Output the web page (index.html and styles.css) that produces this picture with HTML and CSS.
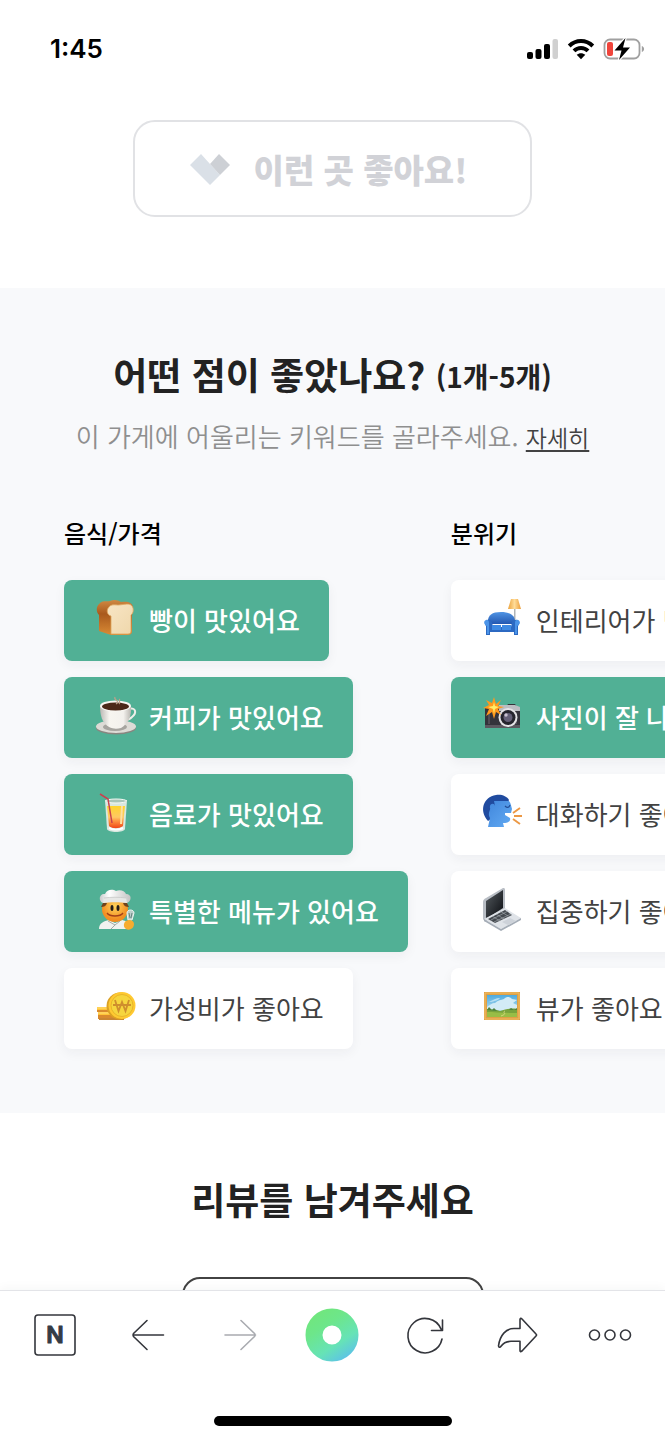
FILE: index.html
```html
<!DOCTYPE html>
<html lang="ko">
<head>
<meta charset="utf-8">
<meta name="viewport" content="width=device-width, initial-scale=1">
<title>리뷰 작성</title>
<link rel="stylesheet" href="styles.css">
</head>
<body>
<header class="status">
  <time class="status-time">1:45</time>
  <div class="status-icons">
    <svg width="32" height="22" viewBox="0 0 32 22" role="img" aria-label="신호">
      <rect x="0" y="14" width="6" height="7" rx="2"/><rect x="8.500" y="11" width="6" height="10" rx="2"/><rect x="17" y="6" width="6" height="15" rx="2"/><rect x="25.500" y="1" width="5.500" height="20" rx="2" fill="#d0d0d0"/>
    </svg>
    <svg width="28" height="22" viewBox="0 0 28 22" role="img" aria-label="와이파이">
      <path d="M2.200 8C9 1.400 19 1.400 25.800 8M7 12.900c4-4 10-4 14 0" fill="none" stroke="#000" stroke-width="4"/>
      <path d="M9.700 16.800c2.400-2.200 6.200-2.200 8.600 0L14 21.200z"/>
    </svg>
    <svg width="42" height="24" viewBox="0 0 42 24" role="img" aria-label="배터리 충전 중">
      <rect x="1.500" y="2.500" width="35" height="19" rx="5.500" fill="none" stroke="#a0a0a0" stroke-width="1.800"/>
      <path d="M38.800 9v6c3-1 3-5 0-6z" fill="#a0a0a0"/>
      <rect x="4" y="5" width="6" height="14" rx="2" fill="#f0453c"/>
      <path d="M22.500 1 11.500 13.500h7L16 23 27 10.500h-7z" stroke="#fff" stroke-width="2.500" paint-order="stroke" stroke-linejoin="round"/>
    </svg>
  </div>
</header>

<main class="page">
  <div class="like-area">
    <button class="like" type="button">
      <svg width="40" height="32" viewBox="0 0 40 32" aria-hidden="true">
        <path d="M0 12 11 1l9 10 10 11-10 10z" fill="#dae0e7"/>
        <path d="m20 11 9-10 11 11-10 10z" fill="#cdd0d5"/>
      </svg>
      이런 곳 좋아요!
    </button>
  </div>

  <section class="keywords">
    <h2 class="title">어떤 점이 좋았나요? <span class="title-note">(1개-5개)</span></h2>
    <p class="lead">이 가게에 어울리는 키워드를 골라주세요. <a class="more" href="#">자세히</a></p>
    <div class="columns">
      <div class="column">
        <h3 class="category">음식/가격</h3>
        <button class="chip chip-on" type="button" aria-pressed="true">
          <svg class="emoji" viewBox="0 0 40 40" aria-hidden="true">
            <defs>
              <linearGradient id="crust" x2="0" y2="1"><stop stop-color="#d08a43"/><stop offset=".4" stop-color="#a9591d"/><stop offset="1" stop-color="#d98b35"/></linearGradient>
              <linearGradient id="crumb" x2="1" y2="1"><stop stop-color="#f8e5c4"/><stop offset="1" stop-color="#efd7ab"/></linearGradient>
            </defs>
            <path d="M3 5C6 1 11 3 14 2c4-2 8-1 11 1 6-1 12 0 12 6 0 3-1 5-1 8v16c0 2-2 3-5 3H15L3 32V16C0 13 0 8 3 5z" fill="url(#crust)"/>
            <path d="M13 8c2-3 6-2 9-2 4 0 10-2 13 0 3 2 3 8 0 10v16c0 2-1 3-3 3H15V17c-4-1-5-6-2-9z" fill="url(#crumb)" stroke="#dda45c" stroke-width=".8"/>
          </svg>
          빵이 맛있어요
        </button>
        <button class="chip chip-on" type="button" aria-pressed="true">
          <svg class="emoji" viewBox="0 0 40 40" aria-hidden="true">
            <defs><linearGradient id="cup"><stop stop-color="#bab8b4"/><stop offset=".3" stop-color="#f7f5f0"/><stop offset=".75" stop-color="#f3f1ed"/><stop offset="1" stop-color="#b8b5b0"/></linearGradient></defs>
            <ellipse cx="20" cy="32" rx="20" ry="6.500" fill="#888680"/><ellipse cx="20" cy="30.500" rx="20" ry="6.500" fill="#dddbd6"/><ellipse cx="19" cy="31" rx="12" ry="4" fill="#a6a49f"/>
            <path d="M33 13c7-2 8 4 3 8-2 2-4 3-7 3" fill="none" stroke="#efeee9" stroke-width="2"/>
            <path d="M4 10h31c1 10-3 18-10 22-4 1-8 1-12-1C6 27 4 19 4 10z" fill="url(#cup)"/>
            <ellipse cx="19.500" cy="10" rx="15.500" ry="5.500" fill="#f8f6f2"/><ellipse cx="19.500" cy="10.500" rx="13.500" ry="4" fill="#4b2819"/>
            <path d="M20 8c5-3-3-4-1-7M23 8c2-2-1-4 1-5" fill="none" stroke="#baa18b" stroke-width="1.200"/>
          </svg>
          커피가 맛있어요
        </button>
        <button class="chip chip-on" type="button" aria-pressed="true">
          <svg class="emoji" viewBox="0 0 40 40" aria-hidden="true">
            <defs><linearGradient id="juice" x2="0" y2="1"><stop stop-color="#ffd52d"/><stop offset=".5" stop-color="#ffc863"/><stop offset=".65" stop-color="#ff9a45"/><stop offset="1" stop-color="#f04416"/></linearGradient></defs>
            <path d="M9 7h22l-2 29c-1 4-17 4-18 0z" fill="#d9e7df"/><path d="M11 13h18l-2 20c-4 3-11 3-14 0z" fill="url(#juice)"/>
            <ellipse cx="20" cy="8" rx="10.500" ry="2" fill="#a8c5b8" stroke="#f5faf5"/><path d="M13 35c4 2 10 2 14 0" fill="none" stroke="#fff" stroke-width="2"/><path d="m26 13-1 18" stroke="#ffe0a2" stroke-width="2"/>
            <path d="m4 1 8 5 4 24" fill="none" stroke="#ca414e" stroke-width="1.500"/>
          </svg>
          음료가 맛있어요
        </button>
        <button class="chip chip-on" type="button" aria-pressed="true">
          <svg class="emoji" viewBox="0 0 40 40" aria-hidden="true">
            <defs><radialGradient id="face" cy=".4"><stop stop-color="#ffd45b"/><stop offset="1" stop-color="#f28e22"/></radialGradient><linearGradient id="hat"><stop stop-color="#c9cbcc"/><stop offset=".3" stop-color="#fff"/><stop offset="1" stop-color="#c4c4c3"/></linearGradient></defs>
            <path d="M3 39c0-6 5-8 10-9l6 3 7-3c5 1 9 3 9 9z" fill="#f1f2ef"/><path d="m12 31 7 4-4 4M19 35l5-4" fill="none" stroke="#a4aaa5"/>
            <circle cx="19" cy="19" r="13" fill="url(#face)"/>
            <path d="M7 13 5 17c3 0 5-1 6-4zm24 0 2 4c-3 0-5-1-6-4z" fill="#70431e"/>
            <path d="M7 13C2 11 3 3 9 4c2-5 8-5 11-3 4-2 9 0 10 3 6 0 6 7 1 9-7-2-17-2-24 0z" fill="url(#hat)"/><path d="M8 8c7-1 15-1 22 0l1 5c-7-1-17-1-24 0z" fill="#e7e8e6"/><path d="M8 8c7-1 15-1 22 0" fill="none" stroke="#c6c8c7" stroke-width=".8"/>
            <ellipse cx="16" cy="18" rx="1.500" ry="3" fill="#241c18"/><ellipse cx="22" cy="18" rx="1.500" ry="3" fill="#241c18"/><path d="M11 23c3 4 13 4 16 0" fill="none" stroke="#a33f18" stroke-width="1.300"/>
            <path d="M31 23c0-4 7-4 7 0l-2 7h-4z" fill="#bbceca" stroke="#f1f7f3"/><path d="m33 23 1 5m2-5-1 5" stroke="#66847e"/><path d="M30 31c3-2 8-1 8 3 0 6-7 7-9 4-2-2-1-6 1-7z" fill="#f7ac2f"/>
          </svg>
          특별한 메뉴가 있어요
        </button>
        <button class="chip" type="button" aria-pressed="false">
          <svg class="emoji" viewBox="0 0 40 40" aria-hidden="true">
            <path d="M1 20h16v5H1zm1 5h16v6H2z" fill="#ffc338"/><path d="M1 23h16v2H1zm1 5h16v4H2z" fill="#d9892e"/><path d="M1 21h14M2 26h14" stroke="#ffe17a"/><path d="M14 31h14v2H3v-2z" fill="#c98532"/>
            <circle cx="24" cy="19" r="13.500" fill="#dba123"/><circle cx="26" cy="18.500" r="13.500" fill="#ffc931"/><circle cx="26" cy="18.500" r="11" fill="#f6d53e" stroke="#e8b52a"/>
            <path d="m19 13 3.500 11L26 15l3.500 9L33 13M17 18h18" fill="none" stroke="#cf8e2d" stroke-width="1.800"/>
          </svg>
          가성비가 좋아요
        </button>
      </div>
      <div class="column">
        <h3 class="category">분위기</h3>
        <button class="chip" type="button" aria-pressed="false">
          <svg class="emoji" viewBox="0 0 40 40" aria-hidden="true">
            <defs><linearGradient id="sofa" x2="0" y2="1"><stop stop-color="#5094e4"/><stop offset="1" stop-color="#2358b1"/></linearGradient><linearGradient id="lamp"><stop stop-color="#eba23c"/><stop offset=".5" stop-color="#ffdc98"/><stop offset="1" stop-color="#eb9e3b"/></linearGradient></defs>
            <path d="M31 9h1.500v15H31z" fill="#afb4b7"/><path d="M28 0h7l3 10H25z" fill="url(#lamp)"/>
            <path d="M5 25c-1-8 3-12 13-12s15 4 14 12z" fill="url(#sofa)"/><path d="M3 27c-4-5 3-9 6-4l1 5h18l1-5c4-5 10-1 6 4v9h-4v-3H7v3H3z" fill="#2c69c2"/>
            <path d="M9 26h9v5H9zm10 0h9v5h-9z" fill="#3e8ae3"/><path d="M3 21c-3 1-2 5 1 6v8h2V24c0-2-1-4-3-3m32 0c3 1 2 5-1 6v8h-2V24c0-2 1-4 3-3" fill="#4b94e8"/>
          </svg>
          인테리어가 멋져요
        </button>
        <button class="chip chip-on" type="button" aria-pressed="true">
          <svg class="emoji" viewBox="0 0 40 40" aria-hidden="true">
            <path d="M2 11h21l2-3h7l2 3h3v21H2z" fill="#34333b"/><path d="M16 9h16l5 2v4H16z" fill="#bbbdc2"/><path d="M2 29h35v3H2z" fill="#5b575f"/><path d="M6 16v12M33 16v12" stroke="#6c6770"/>
            <circle cx="25" cy="21.500" r="9.500" fill="#e4e3e6"/><circle cx="25" cy="21.500" r="7.500" fill="#25242d"/><circle cx="25" cy="21.500" r="4.500" fill="#656078"/><circle cx="23" cy="19" r="1.700" fill="#c9c2d2"/>
            <path d="m11 1 2 7 5-4-3 6 6 1-6 2 3 6-5-3-2 7-2-7-6 4 3-7-6-1 6-3-3-5 6 3z" fill="#ff981c"/><path d="m11 6 1 4 4 1-4 2-1 5-1-5-5-2 5-1z" fill="#ffed69"/>
          </svg>
          사진이 잘 나와요
        </button>
        <button class="chip" type="button" aria-pressed="false">
          <svg class="emoji" viewBox="0 0 40 40" aria-hidden="true">
            <defs><linearGradient id="head" x2="1" y2="1"><stop stop-color="#4187dc"/><stop offset="1" stop-color="#62aaf3"/></linearGradient></defs>
            <path d="M5 28C-4 18 0 4 13 2c5-1 11 1 13 5l-4 9z" fill="#204b9f"/>
            <path d="M11 8h15c2 2 2 5 3 8l-1 4h-6v2l5 3c1 4-3 5-7 5l1 4H5l2-9c-3-5 1-8 0-10-1-4 4-6 5-2z" fill="url(#head)"/><path d="M22 13c2 2 4 2 5-1" fill="none" stroke="#234f98" stroke-width="1.200"/>
            <path d="m30 20 7-5M31 23h8m-9 3 7 5" stroke="#ec9845" stroke-width="1.900"/>
          </svg>
          대화하기 좋아요
        </button>
        <button class="chip" type="button" aria-pressed="false">
          <svg class="emoji" viewBox="0 0 40 40" aria-hidden="true">
            <defs><linearGradient id="screen" x2="1" y2="1"><stop stop-color="#555b60"/><stop offset="1" stop-color="#090b0f"/></linearGradient></defs>
            <path d="M0 12c0-2 1-3 3-4L20-2c1 0 2 0 2 2v19L2 32 0 29z" fill="#b8bdc4"/><path d="M3 11 20 0v18L3 29z" fill="url(#screen)"/>
            <path d="m1 29 21-11 16 10-20 11z" fill="#dfe3e8"/><path d="m1 29 17 10 20-11v2L18 41 1 31z" fill="#a5adb7"/><path d="m5 29 17-9 7 5-17 8z" fill="#454a50"/><path d="m8 30 17-9m-14 11 17-8M9 26l8 5m-4-7 8 5m-4-8 8 5" stroke="#abb1b7" stroke-width=".6"/><path d="m19 32 8-4 6 3-8 4z" fill="#cdd2d9"/>
          </svg>
          집중하기 좋아요
        </button>
        <button class="chip" type="button" aria-pressed="false">
          <svg class="emoji" viewBox="0 0 40 40" aria-hidden="true">
            <defs><linearGradient id="sky" x2="0" y2="1"><stop stop-color="#4eaade"/><stop offset="1" stop-color="#d9f0f5"/></linearGradient></defs>
            <path d="M1 5h36v28H1z" fill="#e0a044"/><path d="M2 6h34v26H2z" fill="none" stroke="#f1bd65"/><path d="M4 8h30v22H4z" fill="url(#sky)"/><path d="M4 20c3-2 5-4 8-4 3-3 6-3 9-4 3-3 6-2 8 0l5 1-4 3 4 2v5H4z" fill="#d3ebf6"/><path d="M6 15c4-2 7-4 11-4-2 3-6 3-9 4z" fill="#b7dff3"/>
            <path d="M4 22c5 1 9 0 13 2 6-2 11-3 17-2v8H4z" fill="#78a33c"/><path d="M4 25c8 0 14 1 30 1v4H4z" fill="#98bd46"/><path d="m4 23 2-3 3 3 2-2 3 3m12-1 2-2 3 2 3-2v2" fill="#4b813e"/><path d="M22 24c-4 2 4 2-4 5" stroke="#d3d77c" fill="none"/>
          </svg>
          뷰가 좋아요
        </button>
      </div>
    </div>
  </section>

  <section class="review">
    <h2 class="title">리뷰를 남겨주세요</h2>
    <button class="review-button" type="button" aria-label="리뷰 작성"></button>
  </section>
</main>

<nav class="toolbar">
  <div class="tools">
    <button class="tool" type="button" aria-label="홈">
      <svg width="42" height="42" viewBox="0 0 42 42"><rect x="1" y="1" width="40" height="40" rx="3"/><text class="home-letter" x="21" y="29" text-anchor="middle">N</text></svg>
    </button>
    <button class="tool" type="button" aria-label="뒤로">
      <svg width="42" height="42" viewBox="0 0 42 42"><path d="M36.500 21H6M20 6.500 6.500 19.500q-1 1.500 0 3L20 35.500"/></svg>
    </button>
    <button class="tool tool-off" type="button" aria-label="앞으로" disabled>
      <svg width="42" height="42" viewBox="0 0 42 42"><path d="M6 21h30.500M22 6.500l13.500 13q1 1.500 0 3L22 35.500"/></svg>
    </button>
    <button class="tool" type="button" aria-label="그린닷">
      <svg width="54" height="54" viewBox="0 0 54 54"><defs><linearGradient id="dot" gradientUnits="userSpaceOnUse" x1="16" y1="4" x2="46" y2="50"><stop stop-color="#70e67f"/><stop offset=".25" stop-color="#6de68a"/><stop offset=".65" stop-color="#66e3b6"/><stop offset="1" stop-color="#5cbfec"/></linearGradient></defs><circle class="dot-ring" cx="27" cy="27" r="18"/></svg>
    </button>
    <button class="tool" type="button" aria-label="새로고침">
      <svg width="42" height="42" viewBox="0 0 42 42"><path d="M38 25A17.200 17.200 0 1 1 37 15M38.500 6v10.500H27.500"/></svg>
    </button>
    <button class="tool" type="button" aria-label="공유">
      <svg width="42" height="42" viewBox="0 0 42 42"><path d="M24 14.500V5.500q.5-2 2-.5l14 15q1 1 0 2L26 37q-2 1.500-2-.5v-9.200h-9c-5 0-8 2-10 5-1 1.500-2.500 1-2.500-.5C4 21 10 14.500 18 14.500z"/></svg>
    </button>
    <button class="tool" type="button" aria-label="더보기">
      <svg width="44" height="42" viewBox="0 0 44 42"><circle cx="6.500" cy="21" r="5"/><circle cx="22" cy="21" r="5"/><circle cx="37.500" cy="21" r="5"/></svg>
    </button>
  </div>
  <div class="home-indicator"></div>
</nav>
</body>
</html>
```
FILE: styles.css
```css
* { box-sizing: border-box; }

body {
  margin: 0;
  height: 100vh;
  display: flex;
  flex-direction: column;
  overflow: hidden;
  background: #fff;
  color: #222;
  font-family: "Noto Sans CJK KR", sans-serif;
}

h2, h3, p { margin: 0; }

button {
  font: inherit;
  color: inherit;
  cursor: pointer;
}

svg { flex: none; display: block; }

.status {
  flex: none;
  display: flex;
  align-items: center;
  justify-content: space-between;
  height: 96px;
  padding: 2px 20px 0 50px;
}

.status-time {
  color: #000;
  font: 600 26px/32px Inter, sans-serif;
}

.status-icons {
  display: flex;
  align-items: center;
  gap: 8px;
}

.page {
  flex: 1;
  min-height: 0;
  overflow: hidden auto;
  scrollbar-width: none;
}

.like-area {
  display: flex;
  justify-content: center;
  padding: 24px 0 71px;
}

.like {
  display: flex;
  align-items: center;
  justify-content: center;
  gap: 24px;
  width: 60%;
  height: 97px;
  padding: 0 8px 0 0;
  border: 2px solid #e1e2e5;
  border-radius: 22px;
  background: #fff;
  color: #d1d2d7;
  font-size: 33px;
  font-weight: 900;
}

.keywords {
  padding: 58px 0 64px;
  background: #f8f9fb;
}

.title {
  font-size: 37px;
  font-weight: 700;
  line-height: 56px;
  text-align: center;
}

.title-note {
  font-size: 28px;
  vertical-align: 2px;
}

.lead {
  margin-top: 11px;
  color: #8f8f8f;
  font-size: 26px;
  font-weight: 350;
  line-height: 42px;
  text-align: center;
}

.more {
  color: #424242;
  font-size: 23px;
  text-underline-offset: 3px;
}

.columns {
  display: flex;
  gap: 43px;
  margin: 55px 0 -64px;
  padding: 0 64px 64px;
  overflow-x: auto;
  scrollbar-width: none;
}

.column {
  flex: none;
  display: flex;
  flex-direction: column;
  align-items: flex-start;
  gap: 16px;
}

.category {
  margin-bottom: 11px;
  color: #000;
  font-size: 24px;
  font-weight: 500;
  line-height: 40px;
}

.chip {
  display: flex;
  align-items: center;
  gap: 13px;
  height: 81px;
  padding: 0 29px 3px 32px;
  border: 0;
  border-radius: 8px;
  background: #fff;
  box-shadow: 0 4px 12px rgba(30, 40, 60, 0.05);
  color: #424242;
  font-size: 26px;
  font-weight: 400;
  white-space: nowrap;
}

.chip-on {
  background: #51b095;
  color: #fff;
  font-weight: 500;
}

.emoji {
  width: 40px;
  height: 40px;
  overflow: visible;
}

.review {
  display: flex;
  flex-direction: column;
  align-items: center;
  gap: 50px;
  padding: 58px 0 80px;
}

.review-button {
  width: 302px;
  height: 80px;
  border: 2px solid #424242;
  border-radius: 18px;
  background: #fff;
}

.toolbar {
  flex: none;
  position: relative;
  display: flex;
  flex-direction: column;
  align-items: center;
  gap: 54px;
  padding: 17px 9px 14px;
  border-top: 1px solid #e3e4e8;
  background: #fff;
  box-shadow: 0 -2px 10px rgba(30, 40, 60, 0.04);
}

.tools {
  display: grid;
  grid-template-columns: repeat(7, 1fr);
  width: 100%;
}

.tool {
  display: flex;
  align-items: center;
  justify-content: center;
  height: 54px;
  padding: 0;
  border: 0;
  background: none;
  color: #34363c;
}

.tool-off { color: #a9abb0; }

.tool svg {
  fill: none;
  stroke: currentColor;
  stroke-width: 1.600;
  stroke-linecap: round;
  stroke-linejoin: round;
}

.tool .dot-ring {
  stroke: url(#dot);
  stroke-width: 17;
}

.tool .home-letter {
  fill: #343b45;
  stroke: #343b45;
  stroke-width: 1;
  font: 600 23px Inter, sans-serif;
}

.home-indicator {
  width: 238px;
  height: 10px;
  border-radius: 5px;
  background: #000;
}
```
